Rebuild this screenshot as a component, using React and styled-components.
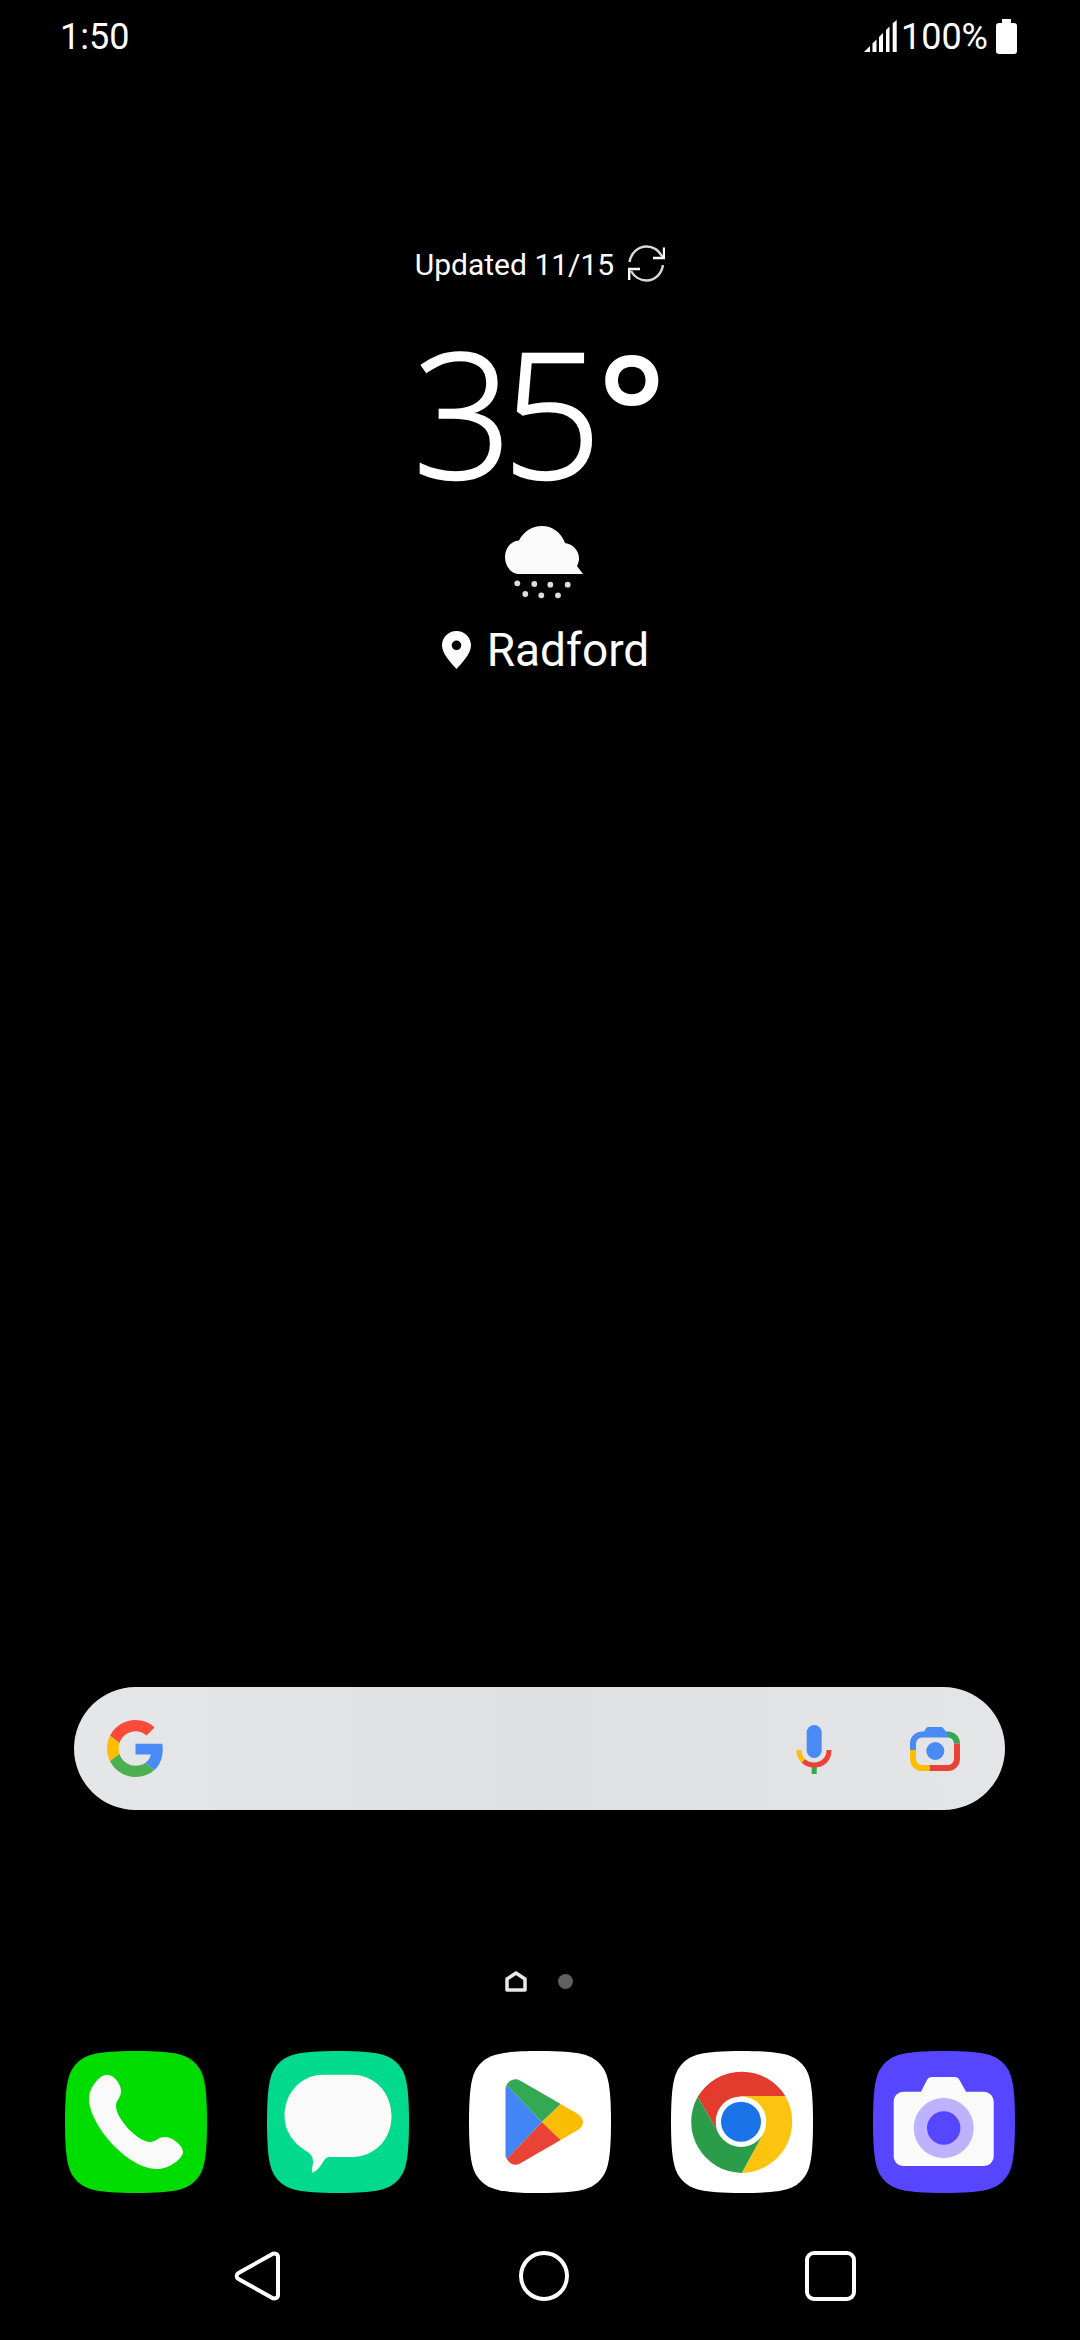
import React from "react";
import styled, { createGlobalStyle } from "styled-components";

const GlobalStyle = createGlobalStyle`
  html, body {
    margin: 0;
    padding: 0;
    background: #000;
  }
`;

const SQUIRCLE =
  "M71 0C112 0 122 4 130 12C138 20 142 30 142 71C142 112 138 122 130 130C122 138 112 142 71 142C30 142 20 138 12 130C4 122 0 112 0 71C0 30 4 20 12 12C20 4 30 0 71 0Z";

const Screen = styled.div`
  width: 1080px;
  height: 2340px;
  background: #000;
  color: #fff;
  font-family: Roboto, "Liberation Sans", sans-serif;
  display: flex;
  flex-direction: column;
  overflow: hidden;
`;

const StatusBar = styled.div`
  height: 73px;
  padding: 0 63px 0 60px;
  display: flex;
  align-items: center;
  justify-content: space-between;
  font-size: 36px;
`;

const StatusRight = styled.div`
  display: flex;
  align-items: center;
  gap: 4px;
`;

const BatteryWrap = styled.span`
  display: flex;
  margin-left: 4px;
`;

const Weather = styled.div`
  margin-top: 172px;
  display: flex;
  flex-direction: column;
  align-items: center;
`;

const UpdatedRow = styled.div`
  height: 37px;
  display: flex;
  align-items: center;
  gap: 14px;
  font-size: 30px;
`;

const UpdatedText = styled.span`
  padding-top: 2px;
`;

const Temperature = styled.div`
  margin-top: 41px;
  margin-left: -11px;
  height: 178px;
  font-family: "Open Sans", sans-serif;
  font-weight: 300;
  font-size: 174px;
  line-height: 170px;
  letter-spacing: -10px;
  white-space: nowrap;
  -webkit-text-stroke: 2.5px #fff;
`;

const Degree = styled.span`
  font-weight: 600;
  font-size: 160px;
  vertical-align: 8px;
  margin-left: 6px;
  -webkit-text-stroke: 0;
`;

const CloudIcon = styled.svg`
  margin-top: 25px;
  margin-left: 9px;
  display: block;
`;

const Location = styled.div`
  margin-top: 24px;
  margin-left: 11px;
  display: flex;
  align-items: center;
  gap: 16px;
  font-size: 46px;
  line-height: 54px;
`;

const SearchBar = styled.div`
  margin: 1010px 75px 0 74px;
  height: 123px;
  border-radius: 62px;
  background: linear-gradient(90deg, #e4e6e7 0%, #dfe0e2 50%, #e3e5e6 100%);
  display: flex;
  align-items: center;
  padding: 0 45px 0 33px;
`;

const SearchActions = styled.div`
  margin-left: auto;
  display: flex;
  align-items: center;
  gap: 76px;
`;

const Pager = styled.div`
  margin-top: 161px;
  height: 20px;
  display: flex;
  align-items: center;
  justify-content: center;
  gap: 31px;
  padding-right: 3px;
`;

const PagerDot = styled.span`
  width: 15px;
  height: 15px;
  border-radius: 50%;
  background: #606060;
`;

const Dock = styled.div`
  margin-top: 60px;
  padding-left: 65px;
  display: flex;
  gap: 60px;
`;

const AppIcon = styled.svg`
  display: block;
  flex: none;
`;

const NavBar = styled.div`
  margin-top: 58px;
  padding-left: 113px;
  display: grid;
  grid-template-columns: repeat(3, 287px);
  justify-items: center;
`;

function SignalIcon() {
  return (
    <svg width="33" height="33" viewBox="0 0 33 33" fill="#fff">
      <polygon points="0,32 6,26 6,32" />
      <polygon points="8.5,23.5 12.5,19.5 12.5,32 8.5,32" />
      <polygon points="15,17 19,13 19,32 15,32" />
      <polygon points="22,10 25.5,6.5 25.5,32 22,32" />
      <polygon points="28.7,3.3 32.7,0 32.7,32 28.7,32" />
    </svg>
  );
}

function BatteryIcon() {
  return (
    <svg width="21" height="35" viewBox="0 0 21 35" fill="#fff">
      <path d="M6 0H15V4H18C20 4 21 5 21 7V32C21 34 20 35 18 35H3C1 35 0 34 0 32V7C0 5 1 4 3 4H6Z" />
    </svg>
  );
}

function RefreshIcon() {
  return (
    <svg width="37" height="37" viewBox="0 0 37 37" fill="none" stroke="#fff" strokeWidth="2.4">
      <path d="M1.5 17C3 8 10 1.5 18.5 1.5C25 1.5 31 5.5 34.5 12" opacity="0.85" />
      <path d="M25 13H36V2.5" />
      <path d="M35 20C33.5 29 27 35.5 18.5 35.5C12 35.5 6 31.5 3 26" opacity="0.85" />
      <path d="M12 24H1.2V35" />
    </svg>
  );
}

function PinIcon() {
  return (
    <svg width="29" height="38" viewBox="0 0 29 38">
      <path
        fill="#fff"
        fillRule="evenodd"
        d="M14.5 0C22.5 0 29 6.3 29 14.3C29 23 20 32 14.5 38C9 32 0 23 0 14.3C0 6.3 6.5 0 14.5 0ZM14.5 9.5A4.8 4.8 0 1 0 14.5 19.1A4.8 4.8 0 1 0 14.5 9.5Z"
      />
    </svg>
  );
}

function GoogleIcon() {
  return (
    <svg width="57" height="57" viewBox="0 0 48 48">
      <path fill="#fb4a3a" d="M24 9.5c3.54 0 6.71 1.22 9.21 3.6l6.85-6.85C35.9 2.38 30.47 0 24 0 14.62 0 6.51 5.38 2.56 13.22l7.98 6.19C12.43 13.72 17.74 9.5 24 9.5z" />
      <path fill="#4a8af4" d="M46.98 24.55c0-1.57-.15-3.09-.38-4.55H24v9.02h12.94c-.58 2.96-2.26 5.48-4.78 7.18l7.73 6c4.51-4.18 7.09-10.36 7.09-17.65z" />
      <path fill="#fdbd00" d="M10.53 28.59c-.48-1.45-.76-2.99-.76-4.59s.27-3.14.76-4.59l-7.98-6.19C.92 16.46 0 20.12 0 24c0 3.88.92 7.54 2.56 10.78l7.97-6.19z" />
      <path fill="#4caf50" d="M24 48c6.48 0 11.93-2.13 15.89-5.81l-7.73-6c-2.15 1.45-4.92 2.3-8.16 2.3-6.26 0-11.57-4.22-13.47-9.91l-7.98 6.19C6.51 42.62 14.62 48 24 48z" />
    </svg>
  );
}

function MicIcon() {
  return (
    <svg width="38" height="52" viewBox="0 0 38 52" fill="none">
      <rect x="10.7" y="2" width="15" height="33" rx="7.5" fill="#4a8af4" />
      <rect x="15.7" y="42" width="5" height="9" fill="#34a853" />
      <path d="M3 27C3 31 4.5 35 7.5 38" stroke="#fdbd00" strokeWidth="5" />
      <path d="M7.5 38C10 40.5 14 42 18 42C27 42 33 36 33 27" stroke="#ea4335" strokeWidth="5" />
    </svg>
  );
}

function LensIcon() {
  return (
    <svg width="50" height="46" viewBox="0 0 50 46" fill="none" strokeWidth="6">
      <path d="M13 7L16 2.5C16.5 1.5 17.5 1 18.5 1H31C32 1 33 1.5 33.5 2.5L37 7Z" fill="#4a8af4" />
      <path d="M3 24V17.5A9 9 0 0 1 12 8.5H37" stroke="#4a8af4" />
      <path d="M37 8.5H38A9 9 0 0 1 47 17.5" stroke="#34a853" />
      <path d="M47 17.5V33A9 9 0 0 1 38 42H20" stroke="#ea4335" />
      <path d="M20 42H12A9 9 0 0 1 3 33V24" stroke="#fdbd00" />
      <circle cx="25.3" cy="25" r="9" fill="#4a8af4" />
    </svg>
  );
}

function PhoneApp() {
  return (
    <AppIcon width="142" height="142" viewBox="0 0 142 142">
      <path d={SQUIRCLE} fill="#00dc00" />
      <path
        fill="#fafafa"
        d="M42 23.7C49 23.7 56 33 56 40C56 47 51 49 51 55C51 68 73 91 85 91C91 91 93 86 100 86C108 86 118 95 118 101C118 107 105 118 92 118C62 118 24 73 24 48C24 36 35 23.7 42 23.7Z"
      />
    </AppIcon>
  );
}

function MessagesApp() {
  return (
    <AppIcon width="142" height="142" viewBox="0 0 142 142">
      <path d={SQUIRCLE} fill="#01d98d" />
      <path
        fill="#fafafa"
        d="M56 23.7H85C107 23.7 124.5 41 124.5 65C124.5 89 107 106 85 106H62C56 106 55 118 46 121.5C43.5 122 46 115 46 111C46 104 42 102 39 100C26 92 17.5 80 17.5 65C17.5 41 35 23.7 56 23.7Z"
      />
    </AppIcon>
  );
}

function PlayApp() {
  return (
    <AppIcon width="142" height="142" viewBox="0 0 142 142">
      <path d={SQUIRCLE} fill="#fff" />
      <path fill="#4285f4" d="M37.5 34C36.8 35.5 36.5 37 36.5 39V103C36.5 105 36.8 106.5 37.8 108L73 71Z" />
      <path fill="#34a853" d="M37.5 34C40 29 46 26.5 51 29.5L91.7 53L73 71Z" />
      <path fill="#ea4335" d="M37.8 108C40.5 113 46 115.5 51 112.5L91.7 89L73 71Z" />
      <path fill="#fbbc04" d="M91.7 53L108 62.5C116 67 116 75 108 79.5L91.7 89L73 71Z" />
    </AppIcon>
  );
}

function ChromeApp() {
  return (
    <AppIcon width="142" height="142" viewBox="0 0 142 142">
      <path d={SQUIRCLE} fill="#fff" />
      <path fill="#e33b2e" d="M26.7 45.7A51.3 51.3 0 0 1 114.3 45L70 45L48 83Z" />
      <path fill="#fcc40f" d="M114.3 45A51.3 51.3 0 0 1 70.7 122L92 83L70 45Z" />
      <path fill="#2b9c4a" d="M70.7 122A51.3 51.3 0 0 1 26.7 45.7L48 83L92 83Z" />
      <circle cx="70" cy="70.7" r="25.3" fill="#fff" />
      <circle cx="70" cy="70.7" r="20" fill="#1a73e8" />
    </AppIcon>
  );
}

function CameraApp() {
  return (
    <AppIcon width="142" height="142" viewBox="0 0 142 142">
      <path d={SQUIRCLE} fill="#5746ff" />
      <path
        fill="#fafafa"
        d="M48 40.7L54 29C55 27 56.5 26 59 26H81C84 26 85.5 27 86.5 29L93 40.7H110.7C116 40.7 120.7 45 120.7 50.7V105C120.7 111 116 115 110.7 115H30.7C25 115 20.7 111 20.7 105V50.7C20.7 45 25 40.7 30.7 40.7Z"
      />
      <circle cx="70.7" cy="77" r="30" fill="#bcb2ff" />
      <circle cx="70.7" cy="77" r="16.7" fill="#5746ff" />
    </AppIcon>
  );
}

export default function App() {
  return (
    <Screen>
      <GlobalStyle />
      <StatusBar>
        <span>1:50</span>
        <StatusRight>
          <SignalIcon />
          <span>100%</span>
          <BatteryWrap>
            <BatteryIcon />
          </BatteryWrap>
        </StatusRight>
      </StatusBar>

      <Weather>
        <UpdatedRow>
          <UpdatedText>Updated 11/15</UpdatedText>
          <RefreshIcon />
        </UpdatedRow>
        <Temperature>
          35<Degree>°</Degree>
        </Temperature>
        <CloudIcon width="80" height="73" viewBox="0 0 80 73">
          <path
            fill="#fafafa"
            d="M14 48C6 48 0 40 0 31C0 22 6 15 14 14.5C18 6 27 0 37 0C47 0 56 6 60 17C68 18 74 25 74 32C74 35 73.5 37 72 40L78 48Z"
          />
          <g fill="#ddd">
            <circle cx="12.3" cy="57.3" r="2.9" />
            <circle cx="29.3" cy="58" r="2.9" />
            <circle cx="45.3" cy="58.7" r="2.9" />
            <circle cx="62.7" cy="58.7" r="2.9" />
            <circle cx="20.3" cy="68" r="2.9" />
            <circle cx="36.3" cy="69.3" r="2.9" />
            <circle cx="53" cy="69.3" r="2.9" />
          </g>
        </CloudIcon>
        <Location>
          <PinIcon />
          <span>Radford</span>
        </Location>
      </Weather>

      <SearchBar>
        <GoogleIcon />
        <SearchActions>
          <MicIcon />
          <LensIcon />
        </SearchActions>
      </SearchBar>

      <Pager>
        <svg width="22" height="21" viewBox="0 0 22 21" fill="none">
          <path d="M2 19V8L11 2L20 8V19Z" stroke="#e8e8e8" strokeWidth="3.5" strokeLinejoin="round" />
        </svg>
        <PagerDot />
      </Pager>

      <Dock>
        <PhoneApp />
        <MessagesApp />
        <PlayApp />
        <ChromeApp />
        <CameraApp />
      </Dock>

      <NavBar>
        <svg width="46" height="50" viewBox="0 0 46 50" fill="none" stroke="#fff" strokeWidth="4">
          <path d="M37.5 3.5C40.5 1.5 44 3 44 6V44C44 47 40.5 48.5 37.5 46.5L4.5 28C2 26.5 2 23.5 4.5 22Z" />
        </svg>
        <svg width="52" height="50" viewBox="0 0 52 50" fill="none" stroke="#fff" strokeWidth="4">
          <circle cx="26" cy="25" r="23" />
        </svg>
        <svg width="51" height="50" viewBox="0 0 51 50" fill="none" stroke="#fff" strokeWidth="4">
          <rect x="2" y="2" width="47" height="46" rx="7" />
        </svg>
      </NavBar>
    </Screen>
  );
}
